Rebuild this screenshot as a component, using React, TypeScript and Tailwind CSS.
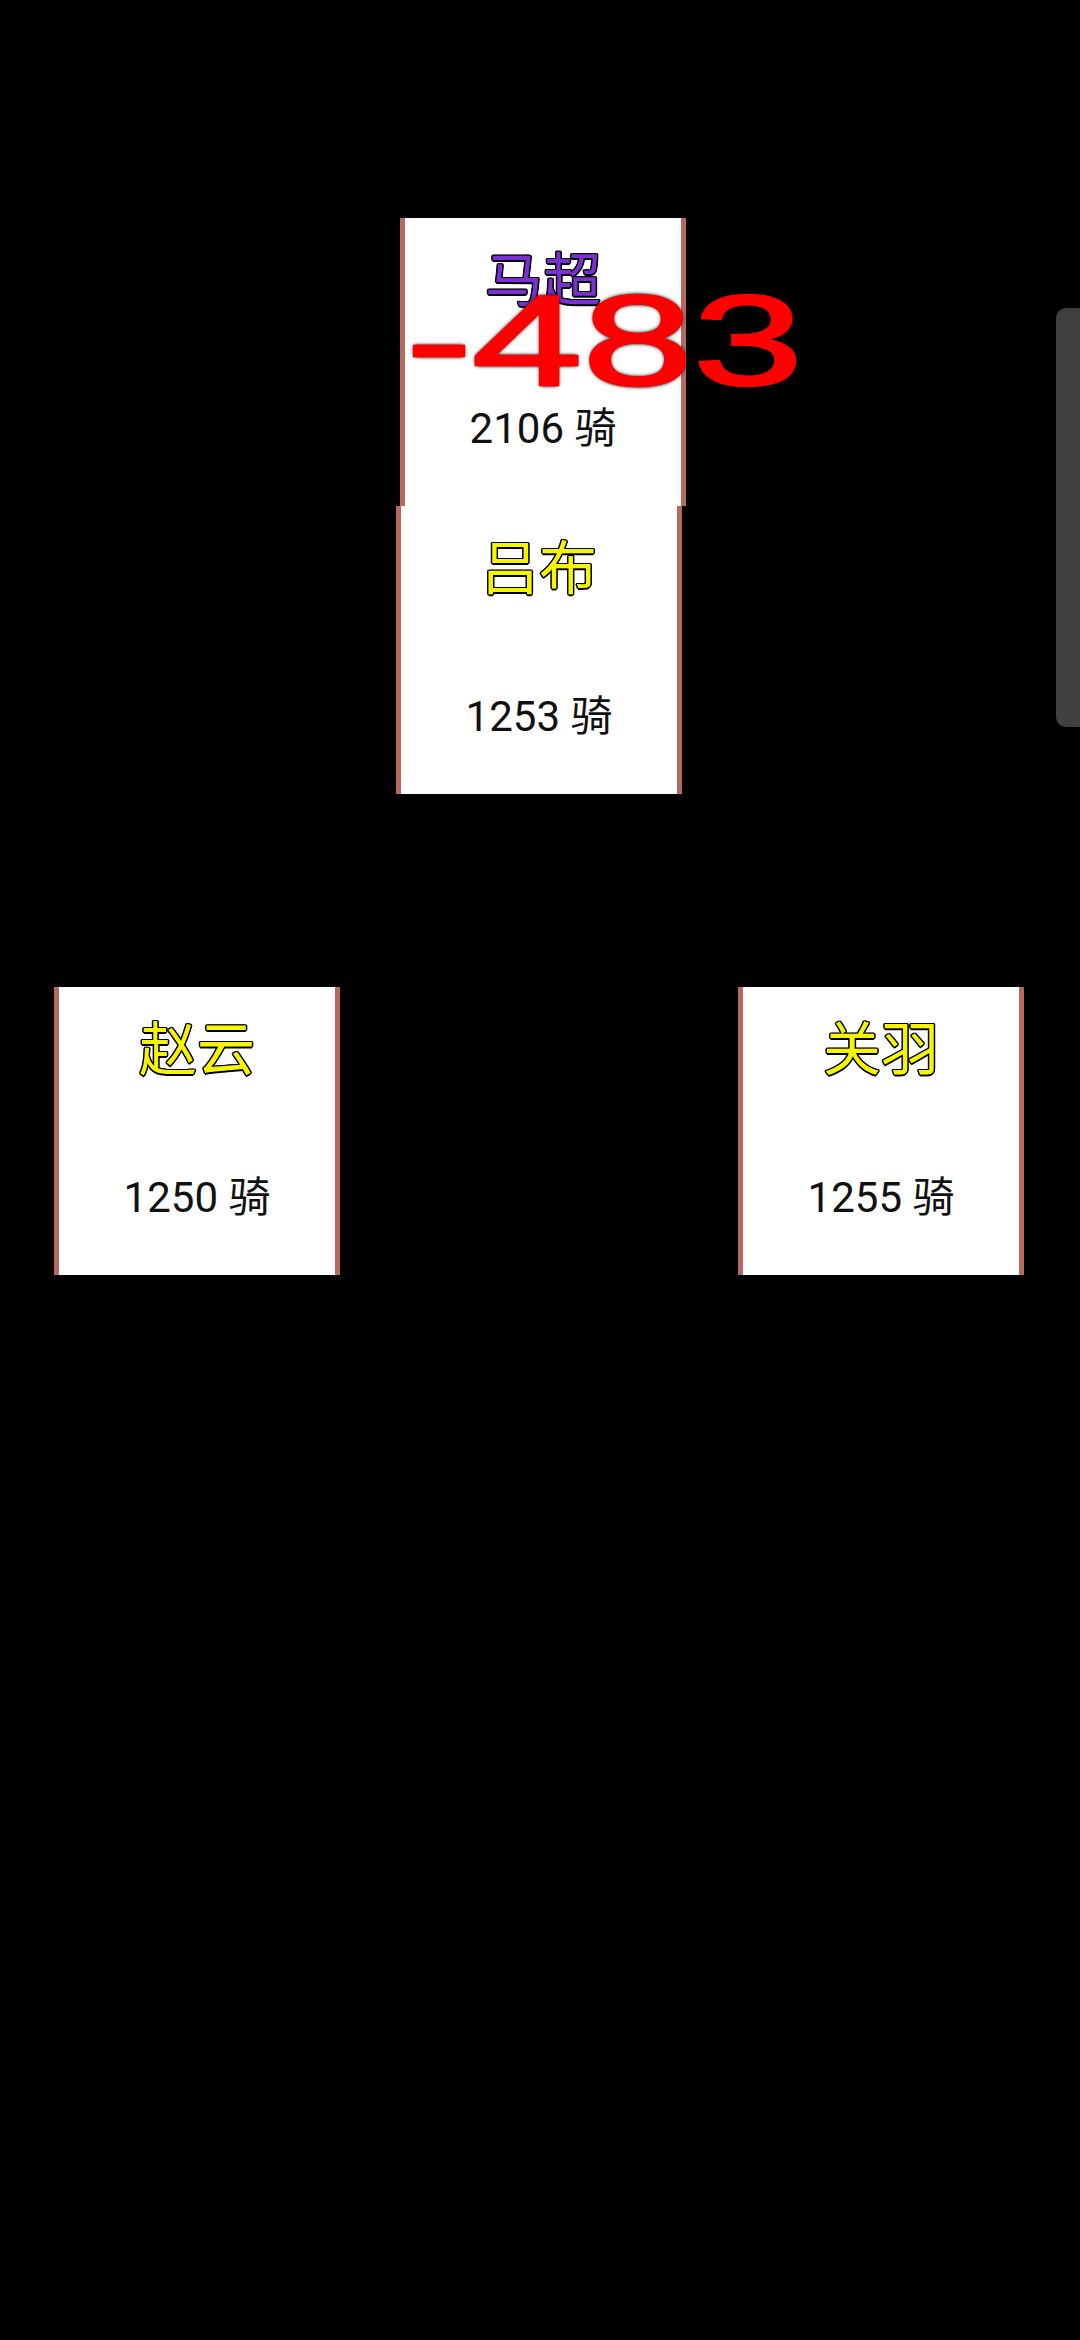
import React from "react";

type Unit = { name: string; troops: number; tone: "ally" | "foe" };

const titleShadow =
  "[text-shadow:1.5px_0_0_#000,-1.5px_0_0_#000,0_1.5px_0_#000,0_-1.5px_0_#000,1px_1px_0_#000,-1px_-1px_0_#000,1px_-1px_0_#000,-1px_1px_0_#000]";

function UnitCard({ unit, className }: { unit: Unit; className?: string }) {
  const nameColor = unit.tone === "foe" ? "text-[#7b30d2]" : "text-[#f5f500]";
  return (
    <div
      className={`flex h-[288px] w-[286px] shrink-0 flex-col items-center border-x-[5px] border-[#b9685f] bg-white ${className ?? ""}`}
    >
      <div
        className={`mt-[29px] font-['Noto_Sans_CJK_SC',sans-serif] text-[58px] leading-none ${nameColor} ${titleShadow}`}
      >
        {unit.name}
      </div>
      <div className="mt-[103px] font-['Roboto','Noto_Sans_CJK_SC',sans-serif] text-[42px] leading-none text-[#111]">
        {unit.troops} 骑
      </div>
    </div>
  );
}

export default function App() {
  const enemy: Unit = { name: "马超", troops: 2106, tone: "foe" };
  const leader: Unit = { name: "吕布", troops: 1253, tone: "ally" };
  const left: Unit = { name: "赵云", troops: 1250, tone: "ally" };
  const right: Unit = { name: "关羽", troops: 1255, tone: "ally" };

  return (
    <div className="relative h-[2340px] w-[1080px] overflow-hidden bg-black">
      <div className="flex flex-col pt-[218px]">
        <div className="relative ml-[400px] w-[286px]">
          <UnitCard unit={enemy} />
          {/* floating damage number */}
          <span className="pointer-events-none absolute left-[6px] top-[59px] origin-left scale-x-[1.55] whitespace-nowrap font-['Liberation_Sans',sans-serif] text-[128px] leading-none text-[#ff0000] [-webkit-text-stroke:2.5px_#ff0000] [text-shadow:0_0_4px_#000,0_0_3px_#000,0_0_2px_#000]">
            -483
          </span>
        </div>
        <UnitCard unit={leader} className="ml-[396px]" />
        <div className="mt-[193px] flex gap-[398px] pl-[54px]">
          <UnitCard unit={left} />
          <UnitCard unit={right} />
        </div>
      </div>
      {/* scroll thumb */}
      <div className="absolute right-0 top-[308px] h-[419px] w-[24px] rounded-l-[10px] bg-[#404040]" />
    </div>
  );
}
